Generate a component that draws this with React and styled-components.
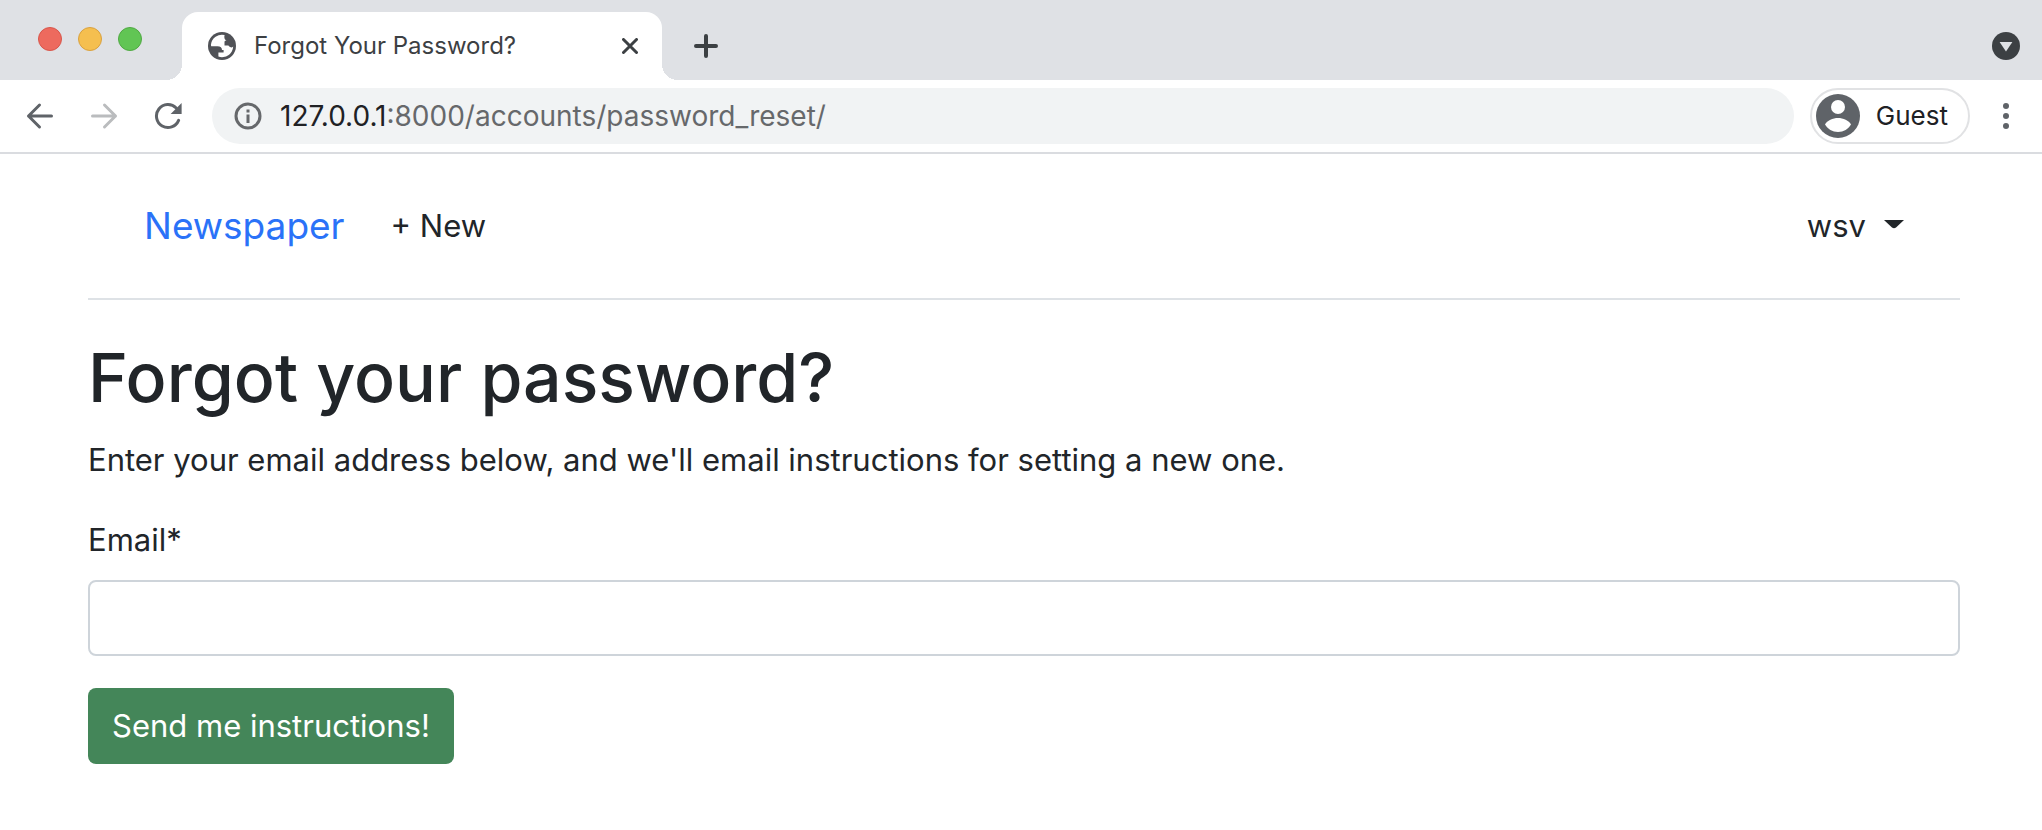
import React from "react";
import styled, { createGlobalStyle } from "styled-components";

const GlobalStyle = createGlobalStyle`
  *, *::before, *::after { box-sizing: border-box; }
  body {
    margin: 0;
    background: #fff;
    color: #212529;
    font-family: Inter, "Liberation Sans", sans-serif;
    font-size: 31px;
    line-height: 48px;
  }
  button, input { font: inherit; color: inherit; }
  button { border: 0; background: none; padding: 0; cursor: pointer; }
  svg { display: block; flex: none; }
`;

const TabStrip = styled.div`
  display: flex;
  align-items: flex-end;
  height: 80px;
  padding: 0 22px 0 38px;
  background: #dfe1e5;
`;

const WindowControls = styled.div`
  display: flex;
  gap: 16px;
  align-self: flex-start;
  padding-top: 27px;
  margin-right: 40px;
`;

const WindowControl = styled.button`
  width: 24px;
  height: 24px;
  border: 1px solid ${(p) => p.$edge};
  border-radius: 50%;
  background: ${(p) => p.$fill};
`;

const Tab = styled.div`
  position: relative;
  display: flex;
  align-items: center;
  width: 480px;
  height: 68px;
  padding: 0 18px 0 26px;
  border-radius: 16px 16px 0 0;
  background: #fff;
  color: #3c4043;
  font-size: 24px;
  line-height: 32px;

  &::before, &::after {
    content: "";
    position: absolute;
    bottom: 0;
    width: 16px;
    height: 16px;
  }
  &::before {
    right: 100%;
    background: radial-gradient(circle at 0 0, transparent 16px, #fff 16px);
  }
  &::after {
    left: 100%;
    background: radial-gradient(circle at 100% 0, transparent 16px, #fff 16px);
  }
`;

const TabTitle = styled.span`
  flex: 1;
  margin-left: 18px;
  white-space: nowrap;
`;

const StripButton = styled.button`
  display: grid;
  place-items: center;
  width: 28px;
  height: 28px;
`;

const StripActions = styled.div`
  display: flex;
  flex: 1;
  align-items: center;
  justify-content: space-between;
  height: 68px;
  padding-left: 30px;
`;

const Toolbar = styled.div`
  display: flex;
  align-items: center;
  height: 74px;
  padding: 0 20px 0 24px;
  border-bottom: 2px solid #dadce0;
`;

const NavButtons = styled.div`
  display: flex;
  gap: 32px;
  margin-right: 28px;
`;

const IconButton = styled.button`
  display: grid;
  place-items: center;
  width: 32px;
  height: 32px;
`;

const AddressBar = styled.div`
  display: flex;
  flex: 1;
  align-items: center;
  height: 56px;
  padding: 0 22px;
  border-radius: 28px;
  background: #f1f3f4;
  color: #66686b;
  font-size: 28px;
  line-height: 40px;
  white-space: nowrap;
`;

const Address = styled.span`
  margin-left: 18px;
`;

const Host = styled.span`
  color: #202124;
`;

const ProfileButton = styled.button`
  display: flex;
  align-items: center;
  gap: 16px;
  height: 56px;
  margin: 0 20px 0 16px;
  padding: 0 20px 0 4px;
  border: 2px solid #e1e2e4;
  border-radius: 28px;
  color: #202124;
  font-size: 26px;
  line-height: 32px;
`;

const Container = styled.div`
  padding: 0 82px 0 88px;
`;

const Header = styled.header`
  display: flex;
  align-items: center;
  height: 146px;
  padding: 0 56px;
  border-bottom: 2px solid #dee2e6;
`;

const Brand = styled.a`
  color: #2a72f8;
  font-size: 37px;
  text-decoration: none;
`;

const HeaderLink = styled.a`
  margin-left: 46px;
  color: inherit;
  text-decoration: none;
`;

const UserMenu = styled.button`
  display: flex;
  align-items: center;
  gap: 18px;
  margin-left: auto;
`;

const Title = styled.h1`
  margin: 34px 0 16px;
  font-size: 68px;
  font-weight: 500;
  line-height: 86px;
`;

const Lead = styled.p`
  margin: 0 0 32px;
`;

const Field = styled.div`
  display: flex;
  flex-direction: column;
  gap: 16px;
  margin-bottom: 32px;
`;

const TextInput = styled.input`
  width: 100%;
  height: 76px;
  padding: 12px 24px;
  border: 2px solid #ced4da;
  border-radius: 8px;
  background: #fff;
`;

const SubmitButton = styled.button`
  height: 76px;
  padding: 0 24px;
  border-radius: 8px;
  background: #448659;
  color: #fff;
`;

const Globe = () => (
  <svg width="28" height="28" viewBox="0 0 28 28" aria-hidden="true">
    <circle cx="14" cy="14" r="14" fill="#505257" />
    <path
      fill="#fff"
      d="M16.6 3.1A11.200 11.200 0 0 0 2.9 12.8L3.200 14.200H9.500C12.500 14.200 14 15.600 14 18H15.600V20.600H10.400V24.600A11.200 11.200 0 0 0 25.200 14.500C24 15.800 22.500 15.600 21.200 14.600L20.400 13.600H16.500V10C16.500 9 17.300 8.500 18.600 8.500C16.600 8 15.900 5.600 16.600 3.100Z"
    />
  </svg>
);

const CloseIcon = () => (
  <svg width="16" height="16" viewBox="0 0 16 16" stroke="#3c4043" strokeWidth="3" strokeLinecap="round">
    <path d="M1.5 1.5 14.5 14.5M14.5 1.5 1.5 14.5" />
  </svg>
);

const PlusIcon = () => (
  <svg width="24" height="24" viewBox="0 0 24 24" stroke="#3c4043" strokeWidth="4" strokeLinecap="round">
    <path d="M12 2V22M2 12H22" />
  </svg>
);

const TabSearchIcon = () => (
  <svg width="28" height="28" viewBox="0 0 28 28">
    <circle cx="14" cy="14" r="14" fill="#3c4043" />
    <path d="M7.6 10H20.4L14 19.6Z" fill="#dfe1e5" />
  </svg>
);

const ArrowIcon = ({ color, flip }) => (
  <svg
    width="28"
    height="28"
    viewBox="0 0 28 28"
    fill="none"
    stroke={color}
    strokeWidth="3"
    strokeLinecap="round"
    strokeLinejoin="round"
  >
    <path d={flip ? "M2.5 14H25.5M14.5 3 25.5 14 14.5 25" : "M25.5 14H2.5M13.5 3 2.5 14 13.5 25"} />
  </svg>
);

const ReloadIcon = () => (
  <svg width="28" height="28" viewBox="0 0 28 28" fill="none">
    <path d="M24.6 18.4A11.5 11.5 0 1 1 22.2 6" stroke="#5f6368" strokeWidth="3" strokeLinecap="round" />
    <path d="M27.6 1V12H16.6Z" fill="#5f6368" />
  </svg>
);

const InfoIcon = () => (
  <svg width="28" height="28" viewBox="0 0 28 28" fill="none" aria-hidden="true">
    <circle cx="14" cy="14" r="12" stroke="#66686b" strokeWidth="3" />
    <path d="M12.5 12.6H15.5V21H12.5ZM12.5 7.6H15.5V10.6H12.5Z" fill="#66686b" />
  </svg>
);

const AvatarIcon = () => (
  <svg width="44" height="44" viewBox="0 0 44 44" aria-hidden="true">
    <circle cx="22" cy="22" r="22" fill="#5f6368" />
    <circle cx="22" cy="13" r="7" fill="#fff" />
    <path d="M9 30.5C11 26.5 17 24 22 24S33 26.5 35 30.5C32.5 35 27.5 38 22 38S11.500 35 9 30.500Z" fill="#fff" />
  </svg>
);

const MoreIcon = () => (
  <svg width="6" height="28" viewBox="0 0 6 28" fill="#5f6368">
    <circle cx="3" cy="4" r="3" />
    <circle cx="3" cy="14" r="3" />
    <circle cx="3" cy="24" r="3" />
  </svg>
);

const CaretIcon = () => (
  <svg width="20" height="16" viewBox="0 0 20 16" aria-hidden="true">
    <path d="M0 2H20L12 9.500Q10 11 8 9.500Z" fill="#212529" />
  </svg>
);

export default function App() {
  return (
    <>
      <GlobalStyle />
      <TabStrip>
        <WindowControls>
          <WindowControl aria-label="Close window" $fill="#ed6a5e" $edge="#d8564b" />
          <WindowControl aria-label="Minimize window" $fill="#f5bf4f" $edge="#d9a140" />
          <WindowControl aria-label="Zoom window" $fill="#61c554" $edge="#50a943" />
        </WindowControls>
        <Tab>
          <Globe />
          <TabTitle>Forgot Your Password?</TabTitle>
          <StripButton aria-label="Close tab">
            <CloseIcon />
          </StripButton>
        </Tab>
        <StripActions>
          <StripButton aria-label="New tab">
            <PlusIcon />
          </StripButton>
          <StripButton aria-label="Search tabs">
            <TabSearchIcon />
          </StripButton>
        </StripActions>
      </TabStrip>
      <Toolbar>
        <NavButtons>
          <IconButton aria-label="Back">
            <ArrowIcon color="#5f6368" />
          </IconButton>
          <IconButton aria-label="Forward">
            <ArrowIcon color="#babcbe" flip />
          </IconButton>
          <IconButton aria-label="Reload">
            <ReloadIcon />
          </IconButton>
        </NavButtons>
        <AddressBar>
          <InfoIcon />
          <Address>
            <Host>127.0.0.1</Host>:8000/accounts/password_reset/
          </Address>
        </AddressBar>
        <ProfileButton>
          <AvatarIcon />
          Guest
        </ProfileButton>
        <IconButton aria-label="Menu">
          <MoreIcon />
        </IconButton>
      </Toolbar>
      <Container>
        <Header>
          <Brand href="#">Newspaper</Brand>
          <HeaderLink href="#">+ New</HeaderLink>
          <UserMenu>
            wsv
            <CaretIcon />
          </UserMenu>
        </Header>
        <main>
          <Title>Forgot your password?</Title>
          <Lead>Enter your email address below, and we'll email instructions for setting a new one.</Lead>
          <form>
            <Field>
              <label htmlFor="email">Email*</label>
              <TextInput id="email" type="email" />
            </Field>
            <SubmitButton type="button">Send me instructions!</SubmitButton>
          </form>
        </main>
      </Container>
    </>
  );
}
